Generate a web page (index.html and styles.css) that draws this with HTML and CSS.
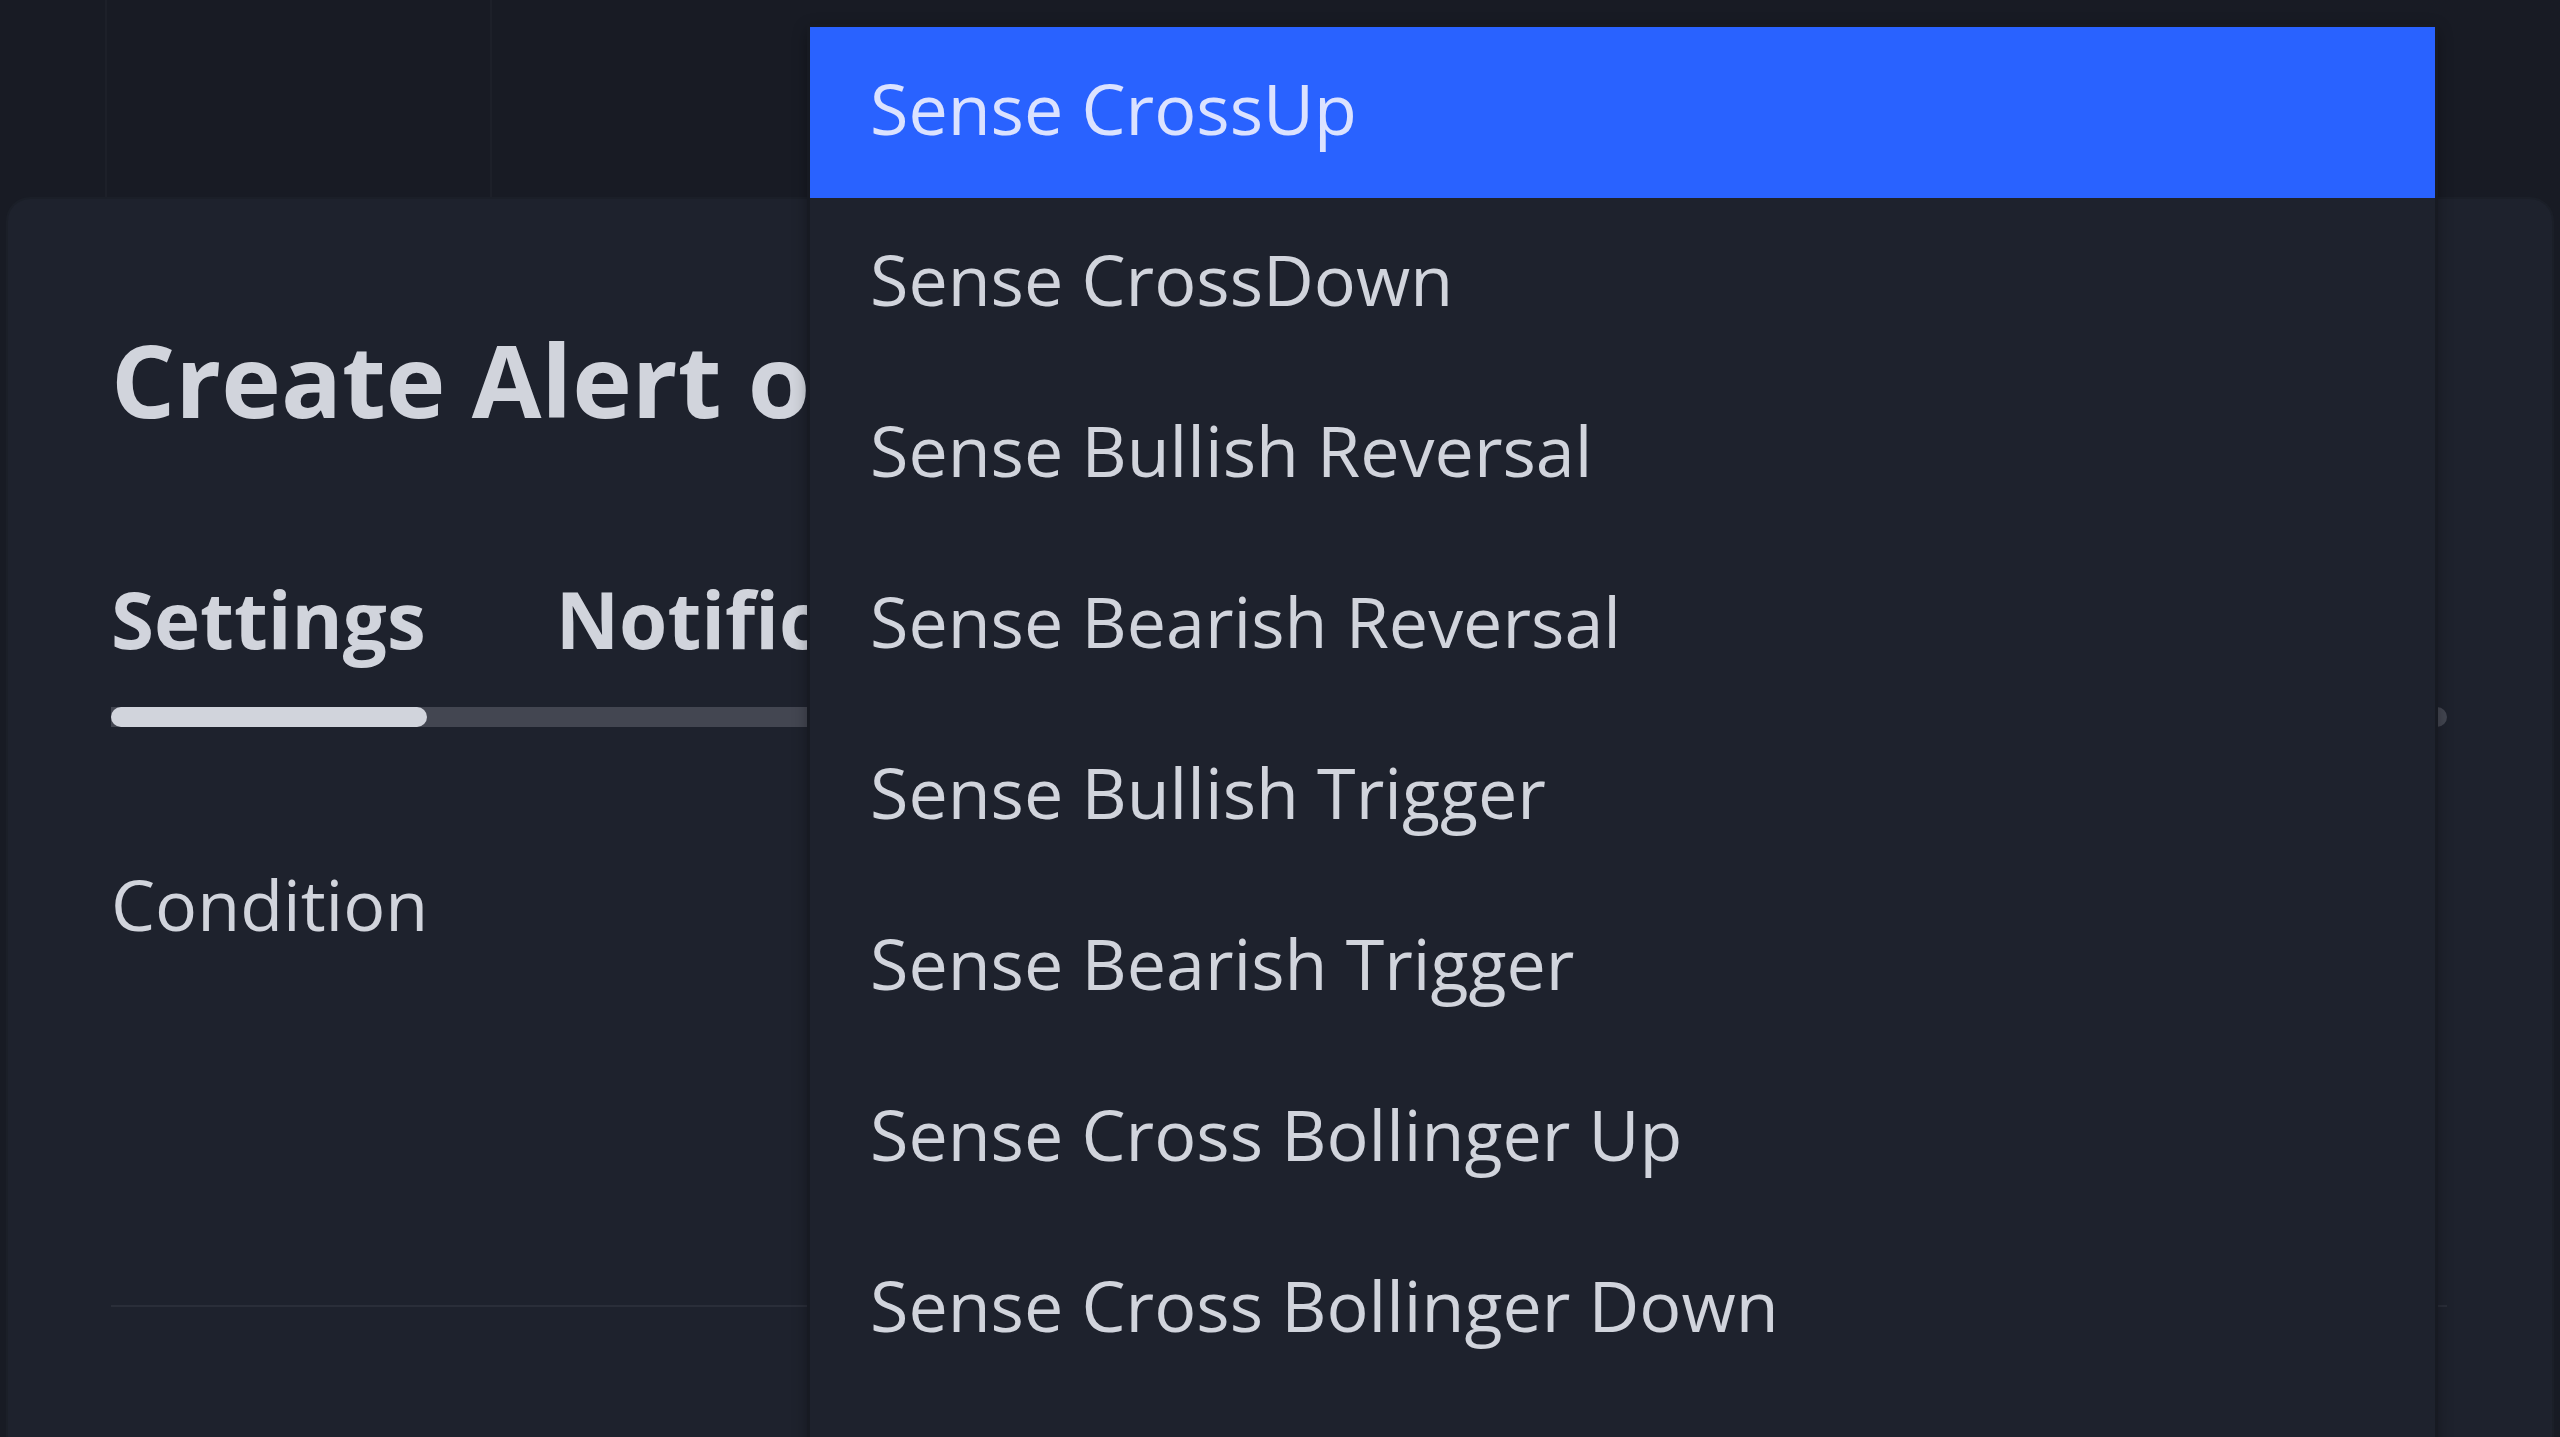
FILE: index.html
```html
<!DOCTYPE html>
<html lang="en">
<head>
<meta charset="utf-8">
<title>Create Alert</title>
<link rel="stylesheet" href="styles.css">
</head>
<body>
<div class="page">
  <div class="chart-strip"></div>
  <section class="dialog">
    <h1 class="dialog-title">Create Alert on Sense</h1>
    <nav class="tabs">
      <span class="tab tab-active">Settings</span>
      <span class="tab">Notifications</span>
    </nav>
    <div class="tab-track"><div class="tab-indicator"></div></div>
    <div class="field-label">Condition</div>
    <div class="field-spacer"></div>
    <div class="divider"></div>
  </section>

  <ul class="dropdown">
    <li class="dropdown-item is-selected">Sense CrossUp</li>
    <li class="dropdown-item">Sense CrossDown</li>
    <li class="dropdown-item">Sense Bullish Reversal</li>
    <li class="dropdown-item">Sense Bearish Reversal</li>
    <li class="dropdown-item">Sense Bullish Trigger</li>
    <li class="dropdown-item">Sense Bearish Trigger</li>
    <li class="dropdown-item">Sense Cross Bollinger Up</li>
    <li class="dropdown-item">Sense Cross Bollinger Down</li>
  </ul>
</div>
</body>
</html>
```

FILE: styles.css
```css
* { box-sizing: border-box; }

html, body {
  margin: 0;
  padding: 0;
  height: 100%;
}

body {
  background: #181b24;
  font-family: "Open Sans", "Noto Sans", "DejaVu Sans", sans-serif;
  color: #d1d4dc;
  overflow: hidden;
}

.page {
  position: relative;
  width: 2560px;
  height: 1437px;
  overflow: hidden;
}

.chart-strip {
  height: 199px;
  background-color: #181b24;
  background-image:
    linear-gradient(to right, transparent 105px, #1d2029 105px, #1d2029 107px, transparent 107px),
    linear-gradient(to right, transparent 490px, #1d2029 490px, #1d2029 492px, transparent 492px);
}

.dialog {
  margin: 0 8px;
  height: 1400px;
  background: #1e222d;
  border-radius: 22px 22px 0 0;
  box-shadow: 0 0 0 2px #1b1f28;
  padding: 110px 105px 0 103px;
}

.dialog-title {
  margin: 0;
  width: 700px;
  overflow: hidden;
  font-size: 101px;
  font-weight: 700;
  line-height: 140px;
  white-space: nowrap;
  color: #d1d4dc;
}

.tabs {
  display: flex;
  gap: 130px;
  width: 700px;
  overflow: hidden;
  margin-top: 120px;
}

.tab {
  font-size: 78px;
  font-weight: 700;
  line-height: 100px;
  white-space: nowrap;
  color: #d1d4dc;
}

.tab-track {
  margin-top: 38px;
  height: 20px;
  background: #434651;
  border-radius: 0 10px 10px 0;
}

.tab-indicator {
  width: 316px;
  height: 20px;
  background: #d1d4dc;
  border-radius: 10px;
}

.field-label {
  margin-top: 129px;
  font-size: 70px;
  line-height: 96px;
  color: #d1d4dc;
}

.field-spacer {
  height: 353px;
}

.divider {
  height: 2px;
  background: #2a2e39;
}

.dropdown {
  position: absolute;
  left: 810px;
  top: 27px;
  width: 1625px;
  height: 1440px;
  margin: 0;
  padding: 0;
  list-style: none;
  background: #1e222d;
  box-shadow: 0 0 0 3px #171a22, 0 4px 16px rgba(0, 0, 0, 0.45);
}

.dropdown-item {
  height: 171px;
  padding: 0 0 9px 60px;
  font-size: 70px;
  line-height: 162px;
  white-space: nowrap;
  color: #d1d4dc;
}

.dropdown-item.is-selected {
  background: #2962ff;
  color: #dbe2ff;
}
```
